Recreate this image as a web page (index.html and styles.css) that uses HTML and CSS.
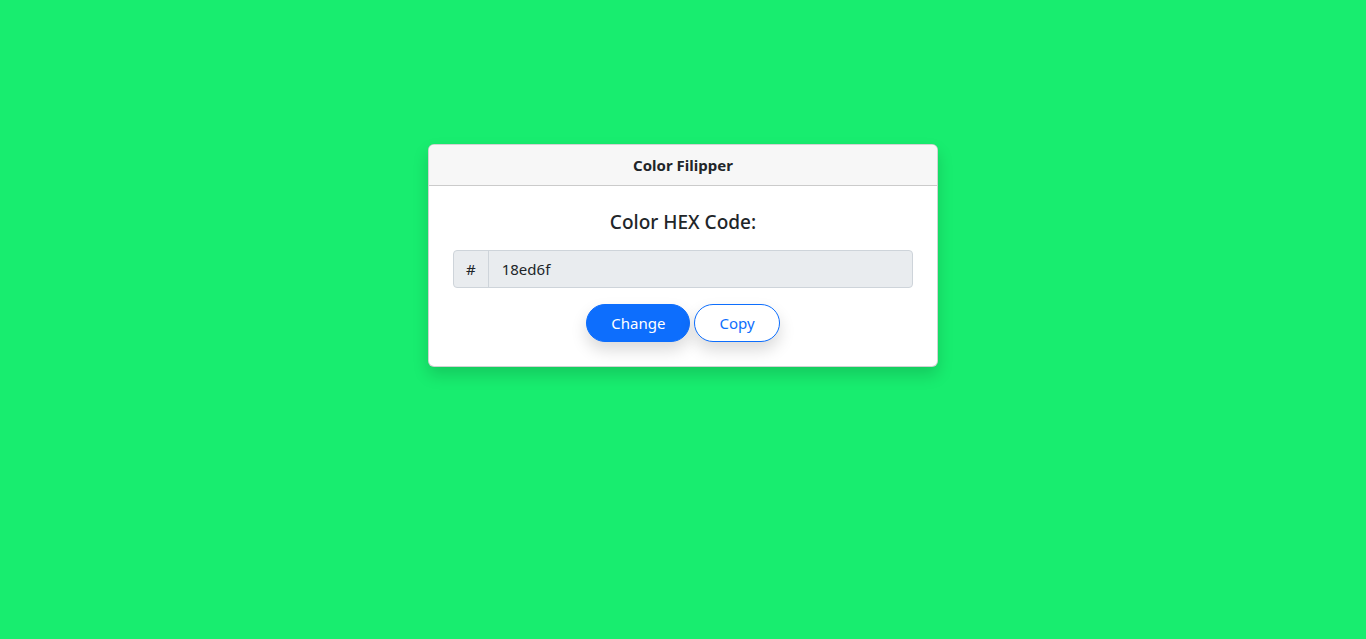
FILE: index.html
```html
<!DOCTYPE html>
<html lang="en">
<head>
<meta charset="utf-8">
<title>Color Filipper</title>
<link rel="stylesheet" href="styles.css">
</head>
<body>
<main class="page">
  <section class="card">
    <header class="card-header">Color Filipper</header>
    <div class="card-body">
      <h5 class="title">Color HEX Code:</h5>
      <div class="input-group">
        <span class="prefix">#</span>
        <input class="hex" type="text" value="18ed6f" readonly>
      </div>
      <div class="actions">
        <button class="btn btn-primary">Change</button>
        <button class="btn btn-outline">Copy</button>
      </div>
    </div>
  </section>
</main>
</body>
</html>
```
FILE: styles.css
```css
* { box-sizing: border-box; }
html, body { margin: 0; height: 100%; }
body {
  background: #18ed6f;
  font-family: "Noto Sans", "Segoe UI", Roboto, "Liberation Sans", sans-serif;
  font-size: 16px;
  line-height: 1.5;
  color: #212529;
}
.page {
  padding-top: 144px;
  display: flex;
  justify-content: center;
}
.card {
  width: 510px;
  background: #fff;
  border: 1px solid rgba(0,0,0,.175);
  border-radius: 6px;
  box-shadow: 0 .5rem 1rem rgba(0,0,0,.15);
  overflow: hidden;
}
.card-header {
  padding: 8px 16px;
  background: #f7f7f7;
  border-bottom: 1px solid rgba(0,0,0,.175);
  text-align: center;
  font-weight: 700;
  font-size: 15px;
  line-height: 24px;
}
.card-body {
  padding: 24px;
  text-align: center;
}
.title {
  margin: 0 0 16px;
  font-size: 19px;
  font-weight: 500;
  line-height: 24px;
}
.input-group {
  display: flex;
  height: 38px;
  border: 1px solid #ced4da;
  border-radius: 4px;
  background: #e9ecef;
  overflow: hidden;
}
.prefix {
  padding: 6px 12px;
  border-right: 1px solid #ced4da;
  font-size: 15px;
  line-height: 24px;
}
.hex {
  flex: 1;
  border: 0;
  background: transparent;
  padding: 6px 13px;
  font: inherit;
  font-size: 15px;
  color: #212529;
  outline: none;
}
.actions {
  margin-top: 16px;
  display: flex;
  justify-content: center;
  gap: 4px;
}
.btn {
  height: 38px;
  padding: 6px 24px;
  border-radius: 50rem;
  font: inherit;
  font-size: 15px;
  line-height: 24px;
  border: 1px solid #0d6efd;
  box-shadow: 0 .5rem 1rem rgba(0,0,0,.15);
  cursor: pointer;
}
.btn-primary { background: #0d6efd; color: #fff; }
.btn-outline { background: #fff; color: #0d6efd; }
```
